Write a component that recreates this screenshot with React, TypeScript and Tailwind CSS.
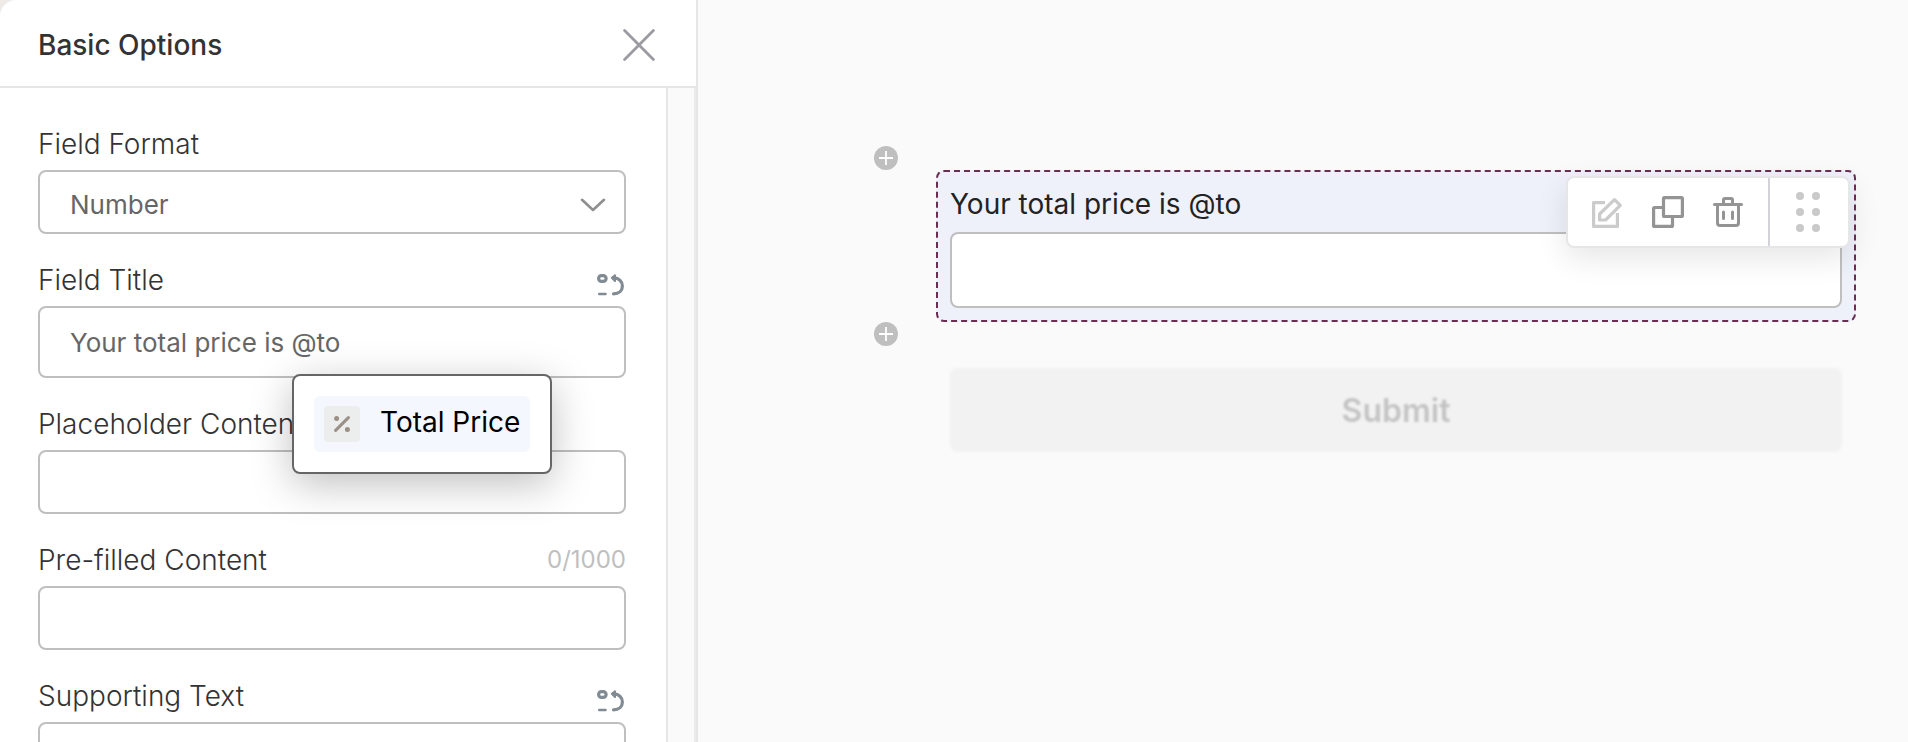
import React, { useState } from 'react'

type IconProps = { className?: string }

function CloseIcon() {
  return (
    <svg width="32" height="32" viewBox="0 0 32 32" fill="none" stroke="#9b9ba1" strokeWidth="2.8" strokeLinecap="round">
      <path d="M1.6 1.6 30.400 30.400M30.400 1.600 1.600 30.400" />
    </svg>
  )
}

function ChevronIcon({ className }: IconProps) {
  return (
    <svg className={className} width="26" height="14" viewBox="0 0 26 14" fill="none" stroke="#8f8f8f" strokeWidth="2.6" strokeLinecap="round" strokeLinejoin="round">
      <path d="M2 1.8 13 12 24 1.8" />
    </svg>
  )
}

function RecallIcon() {
  return (
    <svg width="28" height="24" viewBox="0 0 28 24" fill="none" stroke="#808b94" strokeLinecap="round" strokeLinejoin="round">
      <rect x="2.6" y="2.6" width="7.500" height="5.800" rx="2.9" strokeWidth="3.2" />
      <path d="M3.200 21h6.400" strokeWidth="2.4" />
      <path d="M18 4.900C23 5 26.400 8.500 26.400 13S23 20.800 17.500 20.800" strokeWidth="3.200" />
      <path d="M19 2.300 15.800 4.900 19 8.100z" fill="#808b94" strokeWidth="2" />
    </svg>
  )
}

function PercentIcon() {
  return (
    <svg width="16" height="16" viewBox="0 0 16 16">
      <path d="M1.6 14.4 14.4 1.6" stroke="#9b9085" strokeWidth="3" strokeLinecap="round" />
      <circle cx="2.6" cy="2.6" r="2.5" fill="#9b9085" />
      <circle cx="13.4" cy="13.4" r="2.5" fill="#9b9085" />
    </svg>
  )
}

function EditIcon() {
  return (
    <svg width="32" height="32" viewBox="0 0 32 32" fill="none" stroke="#cbcbcb" strokeWidth="3.2" strokeLinejoin="round">
      <path d="M13 6.600H1.600v23.800h23.800V17" />
      <path d="M7.600 24v-6L22.500 3.600l5.800 5.800L13.600 24z" />
    </svg>
  )
}

function CopyIcon() {
  return (
    <svg width="32" height="32" viewBox="0 0 32 32" fill="none" stroke="#949494" strokeWidth="3.200" strokeLinejoin="round">
      <rect x="11.500" y="1.600" width="18.900" height="18.900" rx="1" />
      <path d="M11.500 11.500h-8.900a1 1 0 0 0-1 1v16.900a1 1 0 0 0 1 1h16.900a1 1 0 0 0 1-1v-8.900" />
    </svg>
  )
}

function TrashIcon() {
  return (
    <svg width="32" height="32" viewBox="0 0 32 32" fill="none" stroke="#949494" strokeWidth="3" strokeLinecap="round" strokeLinejoin="round">
      <path d="M2.5 8.5h27M11.5 8V4a1.500 1.500 0 0 1 1.500-1.500h6a1.500 1.500 0 0 1 1.500 1.500V8M5.500 9v18a2.500 2.500 0 0 0 2.500 2.500h16a2.500 2.500 0 0 0 2.500-2.500V9M11.500 16v6.500M20.500 16v6.500" />
    </svg>
  )
}

function DragIcon() {
  return (
    <svg width="24" height="40" viewBox="0 0 24 40" fill="#c9c9c9">
      <circle cx="4" cy="4" r="4" />
      <circle cx="20" cy="4" r="4" />
      <circle cx="4" cy="20" r="4" />
      <circle cx="20" cy="20" r="4" />
      <circle cx="4" cy="36" r="4" />
      <circle cx="20" cy="36" r="4" />
    </svg>
  )
}

function AddButton() {
  return (
    <button type="button" aria-label="Add field" className="flex size-6 items-center justify-center rounded-full bg-[#bfbfbf]">
      <svg width="14" height="14" viewBox="0 0 14 14" stroke="#fff" strokeWidth="1.8">
        <path d="M7 0v14M0 7h14" />
      </svg>
    </button>
  )
}

interface FieldProps {
  id: string
  label: string
  extra?: React.ReactNode
  children: React.ReactNode
}

function Field({ id, label, extra, children }: FieldProps) {
  return (
    <div className="flex flex-col gap-2">
      <div className="flex items-center justify-between">
        <label htmlFor={id} className="text-[28px] leading-9 font-light text-[#333]">
          {label}
        </label>
        {extra}
      </div>
      {children}
    </div>
  )
}

const recallButton = (
  <button type="button" aria-label="Insert reference" className="pt-[10px] pr-[2px]">
    <RecallIcon />
  </button>
)

export default function App() {
  const [title, setTitle] = useState('Your total price is @to')

  return (
    <div className="flex h-screen overflow-hidden bg-[#fafafa] font-['Inter',sans-serif]">
      <div className="w-[698px] shrink-0 bg-[#eeeae7]">
        <aside className="flex h-full flex-col rounded-tl-2xl border-r-2 border-[#e6e6e6] bg-white">
          <header className="flex h-[88px] shrink-0 items-center justify-between border-b-2 border-[#e6e6e6] pt-1 pr-[41px] pl-[38px]">
            <h2 className="text-[28px] leading-9 font-medium text-[#333]">Basic Options</h2>
            <button type="button" aria-label="Close">
              <CloseIcon />
            </button>
          </header>
          <div className="flex min-h-0 flex-1">
            <form className="flex flex-1 flex-col gap-7 overflow-hidden px-[38px] pt-[38px] pr-10">
              <Field id="format" label="Field Format">
                <div className="relative">
                  <select
                    id="format"
                    className="block h-16 w-full appearance-none rounded-lg border-2 border-[#bfbfbf] bg-white pt-1 pl-[30px] text-[26px] text-[#666]">
                    <option>Number</option>
                  </select>
                  <ChevronIcon className="pointer-events-none absolute top-7 right-5" />
                </div>
              </Field>
              <Field id="title" label="Field Title" extra={recallButton}>
                <div className="relative">
                  <input
                    id="title"
                    type="text"
                    value={title}
                    onChange={(e) => setTitle(e.target.value)}
                    className="block h-[72px] w-full rounded-lg border-2 border-[#bfbfbf] px-[30px] text-[26px] text-[#666]"
                  />
                  <div className="absolute top-[68px] left-[254px] z-10 w-[260px] rounded-lg border-2 border-[#666] bg-white p-5 shadow-[0_10px_40px_rgba(0,0,0,0.25)]">
                    <button
                      type="button"
                      className="flex h-14 w-full items-center gap-5 rounded-md bg-[#f4f7fe] px-[10px] text-[28px] leading-9 whitespace-nowrap text-black">
                      <span className="flex size-9 shrink-0 items-center justify-center rounded bg-[#eceded]">
                        <PercentIcon />
                      </span>
                      <span className="pb-1">Total Price</span>
                    </button>
                  </div>
                </div>
              </Field>
              <Field id="placeholder" label="Placeholder Content">
                <input id="placeholder" type="text" className="h-16 rounded-lg border-2 border-[#bfbfbf] px-[30px] text-[26px] text-[#666]" />
              </Field>
              <Field
                id="prefilled"
                label="Pre-filled Content"
                extra={<span className="text-2xl leading-9 text-[#bfbfbf]">0/1000</span>}>
                <input id="prefilled" type="text" className="h-16 rounded-lg border-2 border-[#bfbfbf] px-[30px] text-[26px] text-[#666]" />
              </Field>
              <Field id="supporting" label="Supporting Text" extra={recallButton}>
                <input id="supporting" type="text" className="h-16 rounded-lg border-2 border-[#bfbfbf] px-[30px] text-[26px] text-[#666]" />
              </Field>
            </form>
            <div className="w-[30px] shrink-0 border-x-2 border-l-[#e6e6e6] border-r-[#ebebeb] bg-[#fafafa]" />
          </div>
        </aside>
      </div>

      <main className="flex-1 pt-[146px] pr-[52px] pl-44">
        <div className="flex gap-[38px]">
          <div className="flex flex-col justify-between">
            <AddButton />
            <AddButton />
          </div>
          <div className="relative my-6 flex flex-1 flex-col gap-[10px] rounded-lg border-2 border-dashed border-[#6b2d52] bg-[#eef1fa] px-3 pt-[14px] pb-3">
            <label htmlFor="price" className="text-[28px] leading-9 text-[#222]">
              {title}
            </label>
            <input id="price" type="text" className="h-[76px] rounded-lg border-2 border-[#bfbfbf] bg-white px-6 text-[28px]" />
            <div className="absolute top-1 right-1 flex h-[72px] w-[284px] rounded-lg border-2 border-[#e6e6e6] bg-white shadow-[0_10px_30px_rgba(0,0,0,0.1)]">
              <div className="flex flex-1 items-center justify-between border-r-2 border-[#d3d3dc] px-6">
                <button type="button" aria-label="Edit">
                  <EditIcon />
                </button>
                <button type="button" aria-label="Duplicate">
                  <CopyIcon />
                </button>
                <button type="button" aria-label="Delete">
                  <TrashIcon />
                </button>
              </div>
              <button type="button" aria-label="Move" className="flex w-[78px] items-center justify-center pr-[2px]">
                <DragIcon />
              </button>
            </div>
          </div>
        </div>
        <div className="mt-[22px] pr-[14px] pl-[76px]">
          <button type="button" disabled className="h-[84px] w-full rounded-lg bg-[#f2f2f2] pt-[2px] text-[32px] font-semibold text-[#c4c4c4] blur-[1px]">
            Submit
          </button>
        </div>
      </main>
    </div>
  )
}
